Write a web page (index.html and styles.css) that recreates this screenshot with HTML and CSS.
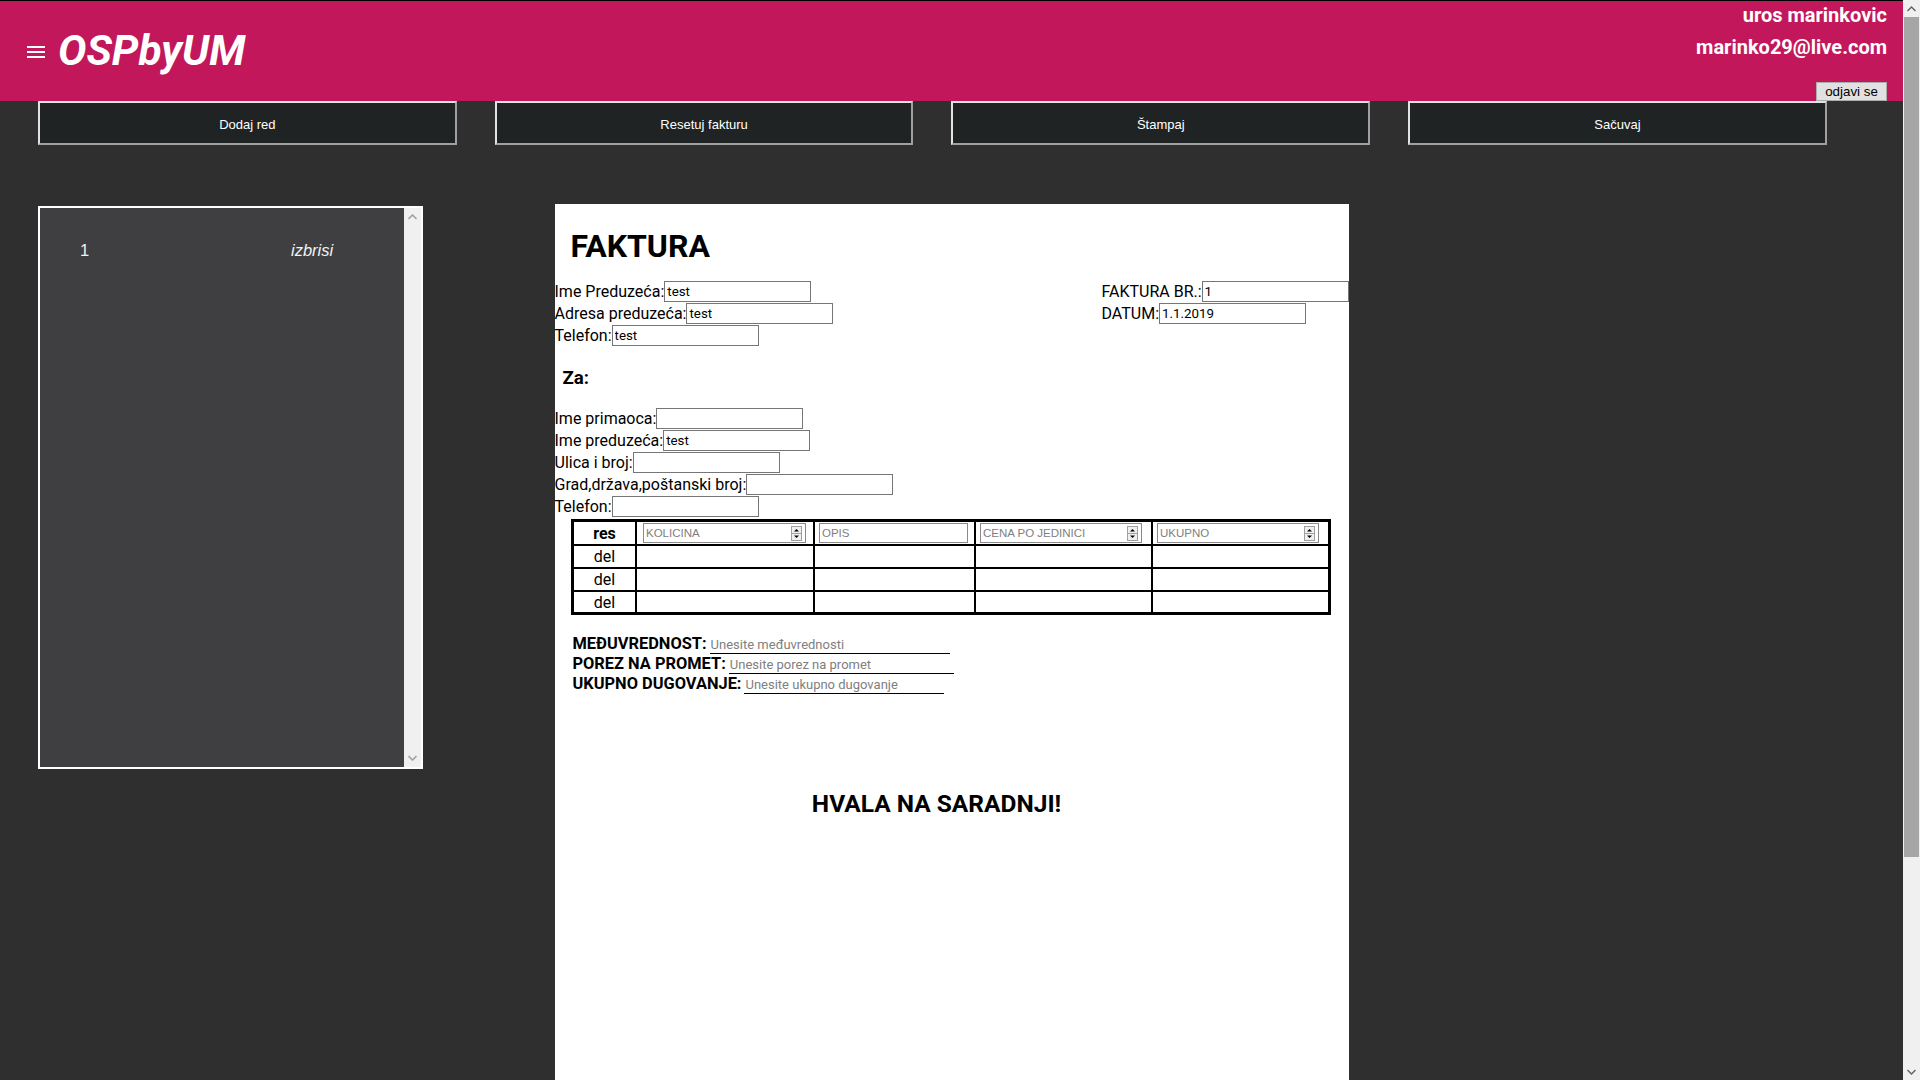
FILE: index.html
```html
<!DOCTYPE html>
<html lang="sr">
<head>
<meta charset="utf-8">
<title>OSPbyUM</title>
<link rel="stylesheet" href="styles.css">
</head>
<body>
<div class="page">
  <header class="topbar">
    <div class="brand">
      <svg class="menu-icon" viewBox="0 0 24 24" width="24" height="24"><path d="M3 18h18v-2H3v2zm0-5h18v-2H3v2zm0-7v2h18V6H3z" fill="#fff"/></svg>
      <span class="logo">OSPbyUM</span>
    </div>
    <div class="user">
      <div class="user-name">uros marinkovic</div>
      <div class="user-mail">marinko29@live.com</div>
      <button class="logout">odjavi se</button>
    </div>
  </header>

  <nav class="actions">
    <button class="action">Dodaj red</button>
    <button class="action">Resetuj fakturu</button>
    <button class="action">Štampaj</button>
    <button class="action">Sačuvaj</button>
  </nav>

  <main class="workspace">
    <aside class="rows-panel">
      <div class="rows-list">
        <div class="row-item"><span class="row-num">1</span><span class="row-del">izbrisi</span></div>
      </div>
      <div class="mini-scroll">
        <svg class="arr" viewBox="0 0 9 6" width="9" height="6"><path d="M0.5 5 L4.5 1 L8.5 5" fill="none" stroke="#a3a3a3" stroke-width="1.6"/></svg>
        <svg class="arr" viewBox="0 0 9 6" width="9" height="6"><path d="M0.5 1 L4.5 5 L8.5 1" fill="none" stroke="#a3a3a3" stroke-width="1.6"/></svg>
      </div>
    </aside>

    <section class="paper">
      <h1 class="title">FAKTURA</h1>
      <div class="head">
        <div class="seller">
          <div class="field"><label>Ime Preduzeća:</label><input class="box" value="test"></div>
          <div class="field"><label>Adresa preduzeća:</label><input class="box" value="test"></div>
          <div class="field"><label>Telefon:</label><input class="box" value="test"></div>
        </div>
        <div class="meta">
          <div class="field"><label>FAKTURA BR.:</label><input class="box" value="1"></div>
          <div class="field"><label>DATUM:</label><input class="box" value="1.1.2019"></div>
        </div>
      </div>

      <h3 class="to">Za:</h3>
      <div class="recipient">
        <div class="field"><label>Ime primaoca:</label><input class="box" value=""></div>
        <div class="field"><label>Ime preduzeća:</label><input class="box" value="test"></div>
        <div class="field"><label>Ulica i broj:</label><input class="box" value=""></div>
        <div class="field"><label>Grad,država,poštanski broj:</label><input class="box" value=""></div>
        <div class="field"><label>Telefon:</label><input class="box" value=""></div>
      </div>

      <table class="items">
        <thead>
          <tr>
            <th class="c-res">res</th>
            <td class="c-qty"><div class="cell-input w-qty"><input placeholder="KOLICINA"><svg class="spin" viewBox="0 0 11 15" width="11" height="15"><rect x="0.5" y="0.5" width="10" height="14" fill="#f0f0f0" stroke="#a0a0a0"/><line x1="0.5" y1="7.5" x2="10.5" y2="7.5" stroke="#a0a0a0"/><path d="M3 5.5 L5.5 3 L8 5.5 Z" fill="#000"/><path d="M3 9.5 L8 9.5 L5.5 12 Z" fill="#000"/></svg></div></td>
            <td class="c-desc"><div class="cell-input w-desc"><input placeholder="OPIS"></div></td>
            <td class="c-price"><div class="cell-input w-price"><input placeholder="CENA PO JEDINICI"><svg class="spin" viewBox="0 0 11 15" width="11" height="15"><rect x="0.5" y="0.5" width="10" height="14" fill="#f0f0f0" stroke="#a0a0a0"/><line x1="0.5" y1="7.5" x2="10.5" y2="7.5" stroke="#a0a0a0"/><path d="M3 5.5 L5.5 3 L8 5.5 Z" fill="#000"/><path d="M3 9.5 L8 9.5 L5.5 12 Z" fill="#000"/></svg></div></td>
            <td class="c-total"><div class="cell-input w-total"><input placeholder="UKUPNO"><svg class="spin" viewBox="0 0 11 15" width="11" height="15"><rect x="0.5" y="0.5" width="10" height="14" fill="#f0f0f0" stroke="#a0a0a0"/><line x1="0.5" y1="7.5" x2="10.5" y2="7.5" stroke="#a0a0a0"/><path d="M3 5.5 L5.5 3 L8 5.5 Z" fill="#000"/><path d="M3 9.5 L8 9.5 L5.5 12 Z" fill="#000"/></svg></div></td>
          </tr>
        </thead>
        <tbody>
          <tr><td class="del">del</td><td></td><td></td><td></td><td></td></tr>
          <tr><td class="del">del</td><td></td><td></td><td></td><td></td></tr>
          <tr><td class="del">del</td><td></td><td></td><td></td><td></td></tr>
        </tbody>
      </table>

      <div class="totals">
        <div class="total-row"><b>MEĐUVREDNOST:</b><input class="line w1" placeholder="Unesite međuvrednosti"></div>
        <div class="total-row"><b>POREZ NA PROMET:</b><input class="line w2" placeholder="Unesite porez na promet"></div>
        <div class="total-row"><b>UKUPNO DUGOVANJE:</b><input class="line w3" placeholder="Unesite ukupno dugovanje"></div>
      </div>

      <h2 class="thanks">HVALA NA SARADNJI!</h2>
    </section>
  </main>
</div>

<div class="page-scroll">
  <div class="ps-btn"><svg viewBox="0 0 9 6" width="9" height="6"><path d="M0.5 5 L4.5 1 L8.5 5" fill="none" stroke="#606060" stroke-width="1.4"/></svg></div>
  <div class="ps-track"><div class="ps-thumb"></div></div>
  <div class="ps-btn"><svg viewBox="0 0 9 6" width="9" height="6"><path d="M0.5 1 L4.5 5 L8.5 1" fill="none" stroke="#606060" stroke-width="1.4"/></svg></div>
</div>
</body>
</html>
```

FILE: styles.css
```css
* { box-sizing: border-box; }
html, body { margin: 0; height: 100%; }
body {
  display: flex;
  background: #2f2f2f;
  font-family: Roboto, "Liberation Sans", Arial, sans-serif;
  overflow: hidden;
}
.page { flex: 1; min-width: 0; height: 100%; overflow: hidden; }

/* header */
.topbar {
  height: 101px;
  border-top: 1px solid #000;
  background: #c2185b;
  display: flex;
  justify-content: space-between;
}
.brand { display: flex; align-items: center; padding-left: 24px; gap: 10px; }
.menu-icon { display: block; margin-top: 2px; }
.logo {
  color: #fff;
  font-size: 42.5px;
  font-weight: 700;
  font-style: italic;
  line-height: 1;
}
.user {
  display: flex;
  flex-direction: column;
  align-items: flex-end;
  padding: 2px 16px 0 0;
  color: #fff;
  font-weight: 700;
  font-size: 20px;
  line-height: 24px;
}
.user-mail { margin-top: 8px; }
.logout {
  margin-top: auto;
  width: 71px;
  height: 19px;
  padding: 0;
  background: #e1e1e1;
  border: 1px solid #adadad;
  color: #000;
  font: 13.33px "Liberation Sans", Arial, sans-serif;
}

/* action buttons */
.actions { display: flex; height: 44px; }
.action {
  width: 22%;
  margin-left: 2%;
  height: 44px;
  padding: 2px 0 0;
  background: #202324;
  color: #fff;
  border: 2px solid;
  border-color: #e3e3e3 #a0a0a0 #a0a0a0 #e3e3e3;
  font: 13px "Liberation Sans", Arial, sans-serif;
}

/* workspace */
.workspace {
  display: grid;
  grid-template-columns: 1fr 794px 1fr;
  align-items: start;
  padding-top: 59px;
}
.rows-panel {
  margin: 2px 0 0 38px;
  width: 385px;
  height: 563px;
  border: 2px solid #fff;
  background: #3f3f42;
  display: flex;
}
.rows-list { flex: 1; padding: 32px 0 0 40px; }
.row-item { display: flex; color: #f2f2f2; font: 16.5px/20px "Liberation Sans", Arial, sans-serif; }
.row-num { width: 211px; }
.row-del { font-style: italic; }
.mini-scroll {
  width: 17px;
  background: #f0f0f0;
  display: flex;
  flex-direction: column;
  justify-content: space-between;
  align-items: center;
  padding: 6px 0 6px;
}
.arr { display: block; }

/* paper */
.paper {
  background: #fff;
  height: 1123px;
  color: #000;
}
.title {
  margin: 24px 0 15px 16px;
  font-size: 32px;
  line-height: 37.5px;
  font-weight: 700;
}
.head { display: flex; }
.seller { width: 547px; flex: none; }
.meta { flex: 1; min-width: 0; }
.field {
  display: flex;
  align-items: center;
  height: 22px;
  font-size: 16px;
}
.field label { flex: none; white-space: nowrap; }
.box {
  flex: none;
  width: 147px;
  height: 21px;
  margin: 0;
  padding: 1px 2px;
  border: 1px solid #767676;
  font: 13.33px Roboto, "Liberation Sans", Arial, sans-serif;
  color: #000;
  background: #fff;
}
.to {
  margin: 20px 0 19px 8px;
  font-size: 18.72px;
  line-height: 22px;
  font-weight: 700;
}

/* items table */
.items {
  margin: 1.5px 0 0 16.5px;
  border-collapse: separate;
  border-spacing: 0;
  table-layout: fixed;
  width: 760px;
  border-top: 3px solid #000;
  border-left: 3px solid #000;
}
.items th, .items td {
  border-right: 2px solid #000;
  border-bottom: 2px solid #000;
  padding: 0;
}
.items tr > :last-child { border-right-width: 3px; }
.items tbody tr:last-child td { border-bottom-width: 3px; }
.c-res { width: 63px; }
.c-qty { width: 178px; }
.c-desc { width: 161px; }
.c-price { width: 177px; }
.c-total { width: 178px; }
.items thead th, .items thead td { height: 24px; padding: 0 0 0 4px; }
.items thead th { padding: 0; font-size: 16px; font-weight: 700; text-align: center; }
.items tbody td { height: 23px; font-size: 16px; text-align: center; }
.cell-input {
  display: flex;
  align-items: center;
  height: 20px;
  border: 1px solid #8a8a8a;
  padding-right: 3px;
  background: #fff;
}
.cell-input input {
  flex: 1;
  min-width: 0;
  height: 18px;
  border: 0;
  padding: 0 2px;
  font: 11.5px "Liberation Sans", Arial, sans-serif;
  outline: none;
}
.cell-input input::placeholder { color: #808080; }
.w-qty { width: 163px; margin-left: 2px; }
.w-desc { width: 149px; }
.w-price { width: 162px; }
.w-total { width: 162px; }
.spin { display: block; flex: none; }

/* totals */
.totals { margin: 18.5px 0 0 18px; }
.total-row {
  display: flex;
  align-items: center;
  height: 20px;
  font-size: 16.4px;
}
.total-row b { font-weight: 700; white-space: nowrap; }
.line {
  flex: none;
  height: 18px;
  margin: 2px 0 0 3px;
  padding: 0 1px;
  border: 0;
  border-bottom: 1px solid #000;
  font: 13px Roboto, "Liberation Sans", Arial, sans-serif;
  background: transparent;
}
.line::placeholder { color: #808080; }
.w1 { width: 240px; }
.w2 { width: 225px; }
.w3 { width: 200px; }

.thanks {
  margin: 96px 0 0;
  padding-right: 30px;
  text-align: center;
  font-size: 24.5px;
  line-height: 28px;
  font-weight: 700;
}

/* page scrollbar */
.page-scroll {
  width: 17px;
  height: 100%;
  background: #f0f0f0;
  display: flex;
  flex-direction: column;
}
.ps-btn {
  height: 17px;
  display: flex;
  align-items: center;
  justify-content: center;
}
.ps-btn svg { display: block; }
.ps-track { flex: 1; padding: 0 1px; }
.ps-thumb { height: 840px; background: #a6a6a6; }
```
